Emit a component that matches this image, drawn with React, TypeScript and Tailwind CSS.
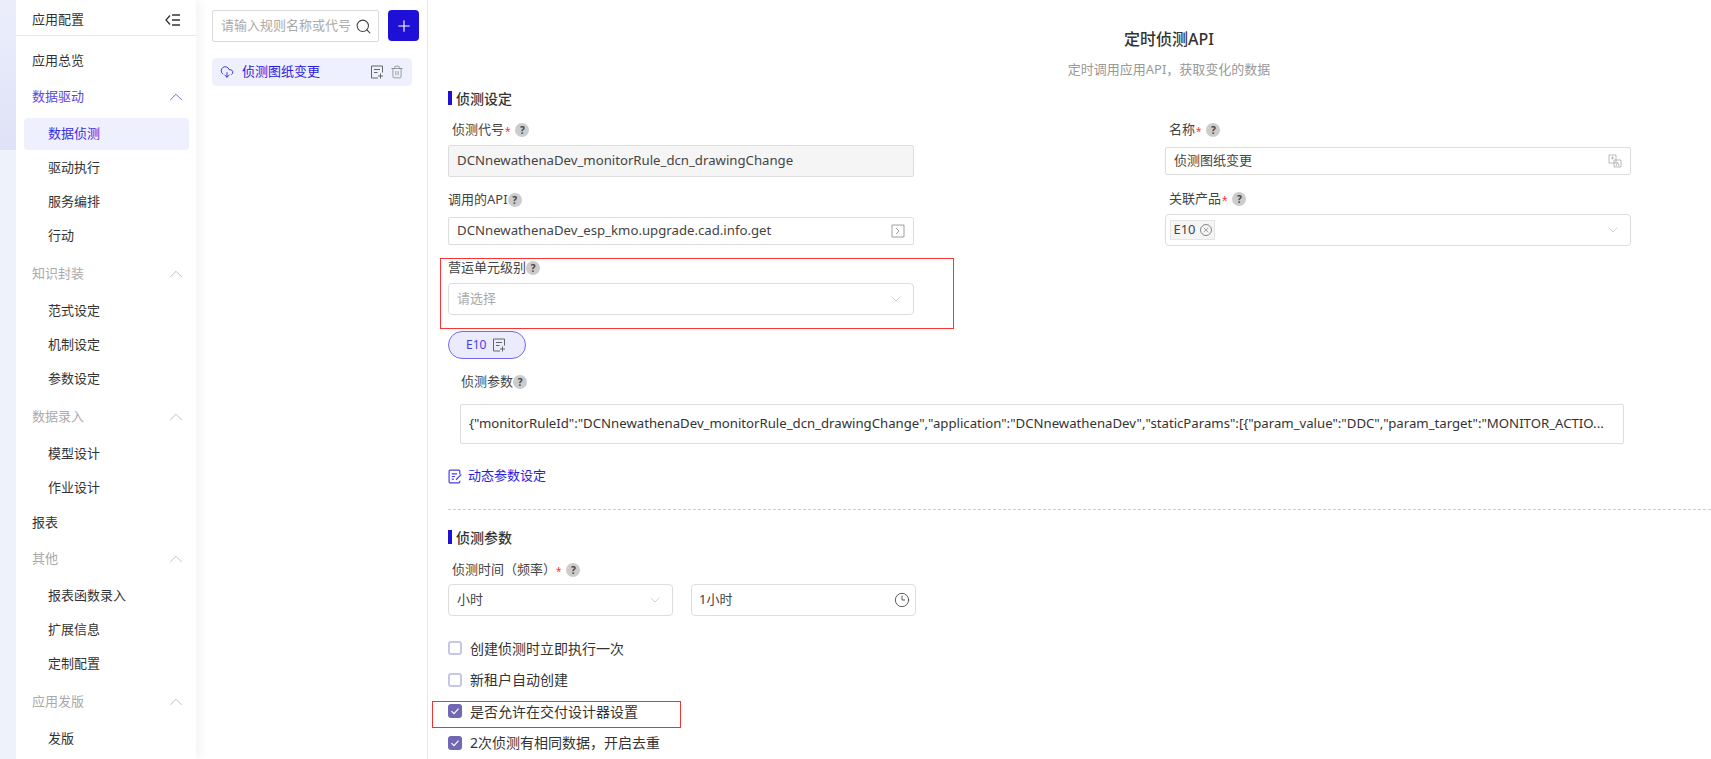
import { ChevronDown, ChevronUp, Clock3, Plus, Search, Trash2, CloudDownload, X } from "lucide-react";

const font = "font-['Noto_Sans','Noto_Sans_CJK_SC',sans-serif]";

type Group = { title: string; items: string[]; gap?: boolean };

const groups: Group[] = [
    { title: "知识封装", items: ["范式设定", "机制设定", "参数设定"], gap: true },
    { title: "数据录入", items: ["模型设计", "作业设计"] },
];

function SubItem({ label, active }: { label: string; active?: boolean }) {
    return (
        <div className="h-[34px] py-px pl-2 pr-[7px]">
            <div className={`h-full flex items-center pl-[24px] rounded-[4px] ${active ? "bg-[#eef0fd] text-[#3b2be0]" : "text-[#333]"}`}>
                {label}
            </div>
        </div>
    );
}

function GroupBlock({ title, items, gap }: Group) {
    return (
        <div className={gap ? "pb-[3px]" : ""}>
            <div className="h-[36px] pl-4 pr-[9px] flex items-center justify-between text-[#aaa]">
                {title}
                <ChevronUp size={22} strokeWidth={1} className="text-[#bbb]" />
            </div>
            <div className="mt-[2px]">
                {items.map((i) => <SubItem key={i} label={i} />)}
            </div>
        </div>
    );
}

function Help({ className = "" }: { className?: string }) {
    return (
        <span className={`inline-flex w-[14px] h-[14px] rounded-full bg-[#ccc] text-[#444] text-[10px] font-bold items-center justify-center ${className}`}>?</span>
    );
}

function Star({ className = "ml-px" }: { className?: string }) {
    return <span className={`text-[#f33] text-[14px] leading-none translate-y-[2px] font-['Liberation_Sans'] ${className}`}>*</span>;
}

function Label({ children, className = "" }: { children: React.ReactNode; className?: string }) {
    return <div className={`flex items-center text-[13px] text-[#444] h-[18px] ${className}`}>{children}</div>;
}

function CopyIcon({ className = "" }: { className?: string }) {
    return (
        <svg viewBox="0 0 14 14" width="14" height="14" fill="none" stroke="currentColor" strokeWidth="1" className={className}>
            <path d="M12.500 7.500V1H1.500v12h6.500" />
            <path d="M4 4.500h6M4 7.500h3.500M10.500 8.500v5M8 11h5" />
        </svg>
    );
}

function Check({ checked, label }: { checked?: boolean; label: string }) {
    return (
        <div className="h-[32px] flex items-center gap-[8px] text-[14px] text-[#333]">
            <span className={`w-[14px] h-[14px] rounded-[3px] flex items-center justify-center ${checked ? "bg-[#6f68b4]" : "border-2 border-[#c5c8e4] bg-white"}`}>
                {checked && (
                    <svg viewBox="0 0 12 12" width="12" height="12" fill="none" stroke="white" strokeWidth="1.2">
                        <path d="M2.500 6.200l2.500 2.500 4.500-5" />
                    </svg>
                )}
            </span>
            {label}
        </div>
    );
}

export default function App() {
    return (
        <div className={`${font} relative flex w-[1711px] h-[759px] overflow-hidden bg-white`}>
            <div className="w-[16px] shrink-0 bg-[#eef3fb] relative">
                <div className="absolute inset-x-0 top-0 h-[150px] bg-gradient-to-b from-[#eceefb] to-[#dee2f6]" />
            </div>

            {/* sidebar */}
            <aside className="w-[180px] shrink-0 bg-white rounded-tl-[12px] shadow-[6px_0_10px_rgba(0,0,0,0.04)] text-[13px] z-10">
                <div className="h-[36px] pt-[4px] border-b border-[#e8e8e8] pl-4 pr-[15px] flex items-center justify-between text-[#333]">
                    应用配置
                    <svg viewBox="0 0 16 14" width="16" height="14" fill="none" stroke="#333" strokeWidth="1.3">
                        <path d="M5 2.500L1 7l4 4.500M7 2h8M7 7h8M7 12h8" />
                    </svg>
                </div>
                <div className="pt-[7px]">
                    <div className="h-[36px] pl-4 flex items-center text-[#333]">应用总览</div>
                    <div className="pb-[3px]">
                        <div className="h-[36px] pl-4 pr-[9px] flex items-center justify-between text-[#5a46e0]">
                            数据驱动
                            <ChevronUp size={22} strokeWidth={1} className="text-[#6a5ae0]" />
                        </div>
                        <div className="mt-[2px]">
                            <SubItem label="数据侦测" active />
                            <SubItem label="驱动执行" />
                            <SubItem label="服务编排" />
                            <SubItem label="行动" />
                        </div>
                    </div>
                    {groups.map((g) => <GroupBlock key={g.title} {...g} />)}
                    <div className="h-[36px] pl-4 flex items-center text-[#333]">报表</div>
                    <GroupBlock title="其他" items={["报表函数录入", "扩展信息", "定制配置"]} gap />
                    <GroupBlock title="应用发版" items={["发版"]} />
                </div>
            </aside>

            {/* rule list */}
            <section className="w-[232px] shrink-0 border-r border-[#e6e6e6] pl-4 pt-[10px]">
                <div className="flex items-start">
                    <div className="w-[167px] h-[32px] border border-[#d9d9d9] rounded-[2px] pl-2 pr-[6px] flex items-center justify-between text-[13px] text-[#aaa]">
                        请输入规则名称或代号
                        <Search size={17} strokeWidth={1.5} className="text-[#444] shrink-0" />
                    </div>
                    <button className="ml-[9px] w-[31px] h-[31px] rounded-[4px] bg-[#1f10d8] flex items-center justify-center text-white">
                        <Plus size={18} strokeWidth={1.5} />
                    </button>
                </div>
                <div className="mt-[16px] w-[200px] h-[28px] rounded-[4px] bg-[#eef0fd] flex items-center pl-2 pr-2 text-[13px] text-[#2a1be0]">
                    <CloudDownload size={14} strokeWidth={1.5} className="shrink-0" />
                    <span className="ml-2 flex-1">侦测图纸变更</span>
                    <CopyIcon className="text-[#666] mr-[6px]" />
                    <Trash2 size={14} strokeWidth={1.2} className="text-[#777]" />
                </div>
            </section>

            {/* form */}
            <main className="flex-1 min-w-0 pl-5 relative text-[13.2px]">
                <div className="pt-[29px] text-center ml-[-20px] pl-[199px]">
                    <div className="text-[16px] leading-[20px] font-medium text-[#333]">定时侦测API</div>
                    <div className="mt-[10px] text-[13px] leading-[20px] text-[#999]">定时调用应用API，获取变化的数据</div>
                </div>

                <div className="mt-[12px] flex items-center h-[14px]">
                    <span className="w-[4px] h-[14px] bg-[#1f10d8]" />
                    <span className="ml-[4px] text-[14px] font-medium text-[#333]">侦测设定</span>
                </div>

                <div className="mt-[16px] flex">
                    <div className="w-[466px]">
                        <Label className="pl-1">侦测代号<Star /><Help className="ml-[5px]" /></Label>
                        <div className="mt-[6px] h-[32px] border border-[#ddd] rounded-[2px] bg-[#f5f5f5] flex items-center px-2 text-[#444]">DCNnewathenaDev_monitorRule_dcn_drawingChange</div>
                        <Label className="mt-[14px]">调用的API<Help /></Label>
                        <div className="mt-[8px] h-[28px] border border-[#ddd] rounded-[2px] flex items-center justify-between px-2 text-[#444]">
                            DCNnewathenaDev_esp_kmo.upgrade.cad.info.get
                            <svg viewBox="0 0 14 14" width="14" height="14" fill="none" stroke="#888" strokeWidth="0.8">
                                <path d="M1 1h12v12H1zM5 4l3 3-3 3" />
                            </svg>
                        </div>
                        <Label className="mt-[14px]">营运单元级别<Help /></Label>
                        <div className="mt-[6px] h-[32px] border border-[#ddd] rounded-[4px] flex items-center justify-between pl-2 pr-[9px] text-[13px] text-[#aaa]">
                            请选择
                            <ChevronDown size={16} strokeWidth={1} className="text-[#bbb]" />
                        </div>
                    </div>
                    <div className="ml-[251px] w-[466px] self-start">
                        <Label className="pl-1">名称<Star /><Help className="ml-[5px]" /></Label>
                        <div className="mt-[8px] h-[28px] border border-[#ddd] rounded-[2px] flex items-center justify-between pl-2 pr-2 text-[13px] text-[#444]">
                            侦测图纸变更
                            <svg viewBox="0 0 14 14" width="14" height="14" fill="none" stroke="#aaa" strokeWidth="0.8">
                                <path d="M1 1h7v8H1zM6 6h7v7H6z" />
                                <path d="M3 4h3M4.500 2.500v3M8 12l1.500-4 1.500 4" />
                            </svg>
                        </div>
                        <Label className="mt-[15px] pl-1">关联产品<Star /><Help className="ml-[5px]" /></Label>
                        <div className="mt-[6px] h-[32px] border border-[#ddd] rounded-[4px] flex items-center justify-between pl-[4px] pr-[9px]">
                            <span className="h-[20px] w-[45px] bg-[#f5f5f5] border border-[#e4e4e4] flex items-center justify-center gap-[4px] text-[13px] text-[#444]">
                                E10
                                <span className="w-[12px] h-[12px] rounded-full border border-[#888] flex items-center justify-center"><X size={8} className="text-[#777]" /></span>
                            </span>
                            <ChevronDown size={16} strokeWidth={1} className="text-[#bbb]" />
                        </div>
                    </div>
                </div>

                <div className="mt-[16px] w-[78px] h-[28px] rounded-full border border-[#7468f0] bg-[#eaecfd] flex items-center pl-[17px] gap-[6px] text-[12px] text-[#4a3de8]">
                    E10
                    <CopyIcon className="text-[#666]" />
                </div>

                <Label className="mt-[14px] pl-[13px]">侦测参数<Help /></Label>
                <div className="mt-[13px] ml-[12px] w-[1164px] h-[40px] border border-[#ddd] rounded-[2px] flex items-center px-2 text-[#333]">
                    <span className="truncate">{'{"monitorRuleId":"DCNnewathenaDev_monitorRule_dcn_drawingChange","application":"DCNnewathenaDev","staticParams":[{"param_value":"DDC","param_target":"MONITOR_ACTIO...'}</span>
                </div>
                <div className="mt-[23px] flex items-center h-[18px] text-[#2a1be0] text-[13px]">
                    <svg viewBox="0 0 14 14" width="15" height="15" fill="none" stroke="#4a3de8" strokeWidth="1.1">
                        <path d="M11 5V2a1 1 0 0 0-1-1H2a1 1 0 0 0-1 1v10a1 1 0 0 0 1 1h8a1 1 0 0 0 1-1v-1M3.500 4.500h5M3.500 7h3M3.500 9.500h2M7.500 10l5-5" />
                    </svg>
                    <span className="ml-[5px]">动态参数设定</span>
                </div>
                <div className="mt-[24px] border-t border-dashed border-[#ccc]" />

                <div className="mt-[20px] flex items-center h-[14px]">
                    <span className="w-[4px] h-[14px] bg-[#1f10d8]" />
                    <span className="ml-[4px] text-[14px] font-medium text-[#333]">侦测参数</span>
                </div>
                <Label className="mt-[17px] pl-1">侦测时间（频率）<Star className="ml-0" /><Help className="ml-[5px]" /></Label>
                <div className="mt-[5px] flex gap-[18px]">
                    <div className="w-[225px] h-[32px] border border-[#ddd] rounded-[4px] flex items-center justify-between pl-2 pr-[9px] text-[13px] text-[#444]">
                        小时
                        <ChevronDown size={16} strokeWidth={1} className="text-[#bbb]" />
                    </div>
                    <div className="w-[225px] h-[32px] border border-[#ddd] rounded-[4px] flex items-center justify-between pl-[7px] pr-[5px] text-[13px] text-[#444]">
                        1小时
                        <Clock3 size={16} strokeWidth={1.2} className="text-[#333]" />
                    </div>
                </div>
                <div className="mt-[16px] flex flex-col -space-y-[0.5px]">
                    <Check label="创建侦测时立即执行一次" />
                    <Check label="新租户自动创建" />
                    <Check checked label="是否允许在交付设计器设置" />
                    <Check checked label="2次侦测有相同数据，开启去重" />
                </div>

                {/* red annotation boxes */}
                <div className="absolute left-[12px] top-[258px] w-[514px] h-[71px] border border-[#f33]" />
                <div className="absolute left-[4px] top-[701px] w-[249px] h-[27px] border border-[#e33]" />
            </main>
        </div>
    );
}
